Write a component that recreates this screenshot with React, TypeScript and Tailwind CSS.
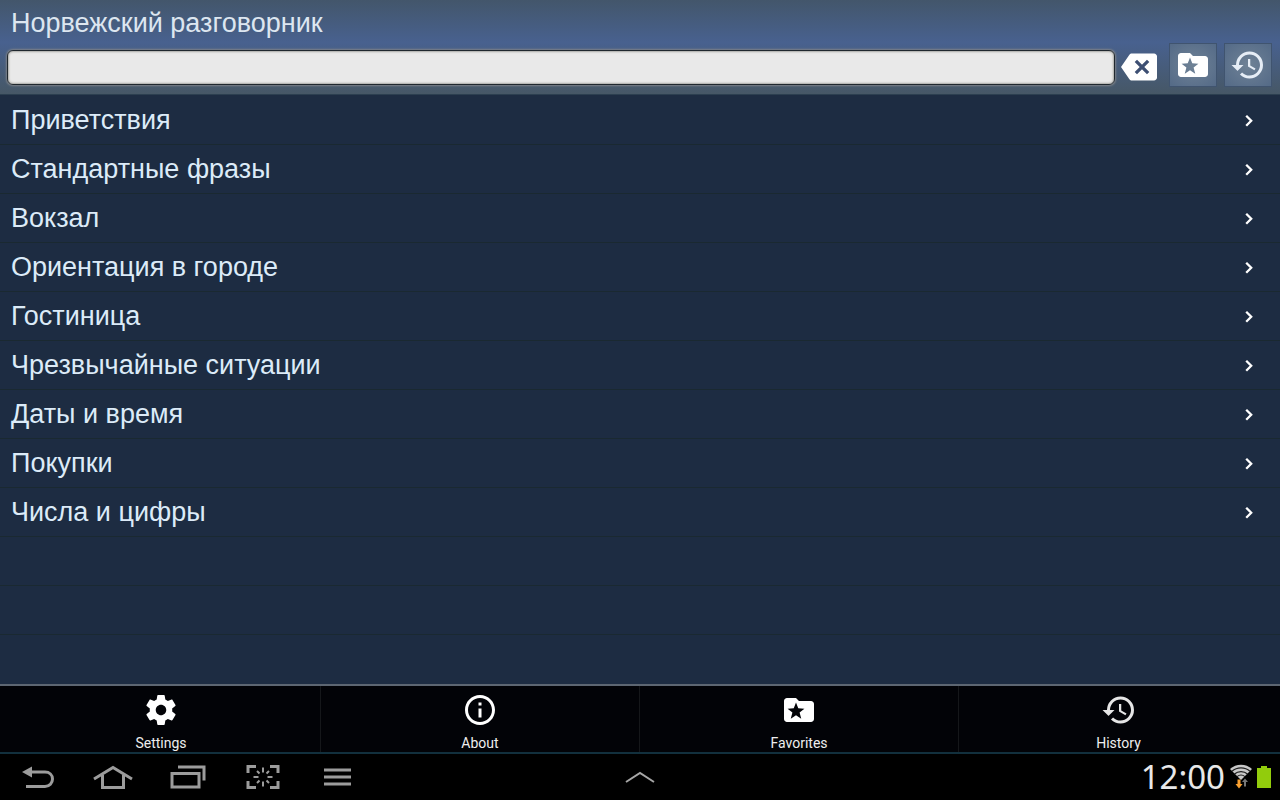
import { useState } from 'react';
import type { ReactNode } from 'react';
import { MdHistory, MdInfoOutline } from 'react-icons/md';

interface MenuItem {
  label: string;
  icon: ReactNode;
}

const categories = [
  'Приветствия',
  'Стандартные фразы',
  'Вокзал',
  'Ориентация в городе',
  'Гостиница',
  'Чрезвычайные ситуации',
  'Даты и время',
  'Покупки',
  'Числа и цифры',
];

function FolderStarIcon({ className }: { className?: string }) {
  return (
    <svg viewBox="0 0 24 24" fill="currentColor" fillRule="evenodd" className={className} aria-hidden="true">
      <path d="M20 6h-8l-2-2H4c-1.1 0-2 .9-2 2v12c0 1.1.9 2 2 2h16c1.1 0 2-.9 2-2V8c0-1.1-.9-2-2-2zM10 7l1.500 3.900 4.100.2-3.200 2.600 1.100 4.100-3.500-2.300-3.500 2.300 1.100-4.100-3.200-2.600 4.100-.2z" />
    </svg>
  );
}

function ClearIcon({ className }: { className?: string }) {
  return (
    <svg viewBox="0 0 24 24" className={className} aria-hidden="true">
      <path
        fill="currentColor"
        d="M22 3H7.200c-.6 0-1.200.3-1.600.9L0 12l5.600 8.100c.4.600 1 .9 1.600.9H22c1.100 0 2-.9 2-2V5c0-1.100-.9-2-2-2z"
      />
      <path d="M9.900 7.900l8.200 8.200M18.100 7.900l-8.200 8.200" stroke="#3d4f73" strokeWidth="2.200" />
    </svg>
  );
}

function ChevronIcon({ className }: { className?: string }) {
  return (
    <svg viewBox="0 0 24 24" fill="none" stroke="currentColor" strokeWidth="2.300" className={className} aria-hidden="true">
      <path d="M9.200 7.700l5 5-5 5" />
    </svg>
  );
}

function GearIcon({ className }: { className?: string }) {
  return (
    <svg viewBox="0 0 24 24" fill="currentColor" className={className} aria-hidden="true">
      <path d="M19.43 12.98c.04-.32.07-.64.07-.98s-.03-.66-.07-.98l2.110-1.650c.19-.15.24-.42.12-.64l-2-3.460c-.12-.22-.39-.3-.61-.22l-2.490 1c-.52-.4-1.080-.73-1.690-.98l-.38-2.650C14.460 2.180 14.250 2 14 2h-4c-.25 0-.46.18-.49.42l-.38 2.650c-.61.25-1.170.59-1.690.98l-2.490-1c-.23-.09-.49 0-.61.22l-2 3.460c-.13.22-.07.49.12.64l2.110 1.650c-.04.32-.07.65-.07.98s.03.66.07.98l-2.110 1.650c-.19.15-.24.42-.12.64l2 3.460c.12.22.39.3.61.22l2.490-1c.52.4 1.080.73 1.690.98l.38 2.650c.03.24.24.42.49.42h4c.25 0 .46-.18.49-.42l.38-2.650c.61-.25 1.170-.59 1.690-.98l2.490 1c.23.09.49 0 .61-.22l2-3.460c.12-.22.07-.49-.12-.64l-2.110-1.650zM12 15.500c-1.930 0-3.500-1.570-3.500-3.500s1.570-3.500 3.500-3.500 3.500 1.570 3.500 3.500-1.570 3.500-3.500 3.500z" />
    </svg>
  );
}

function BackIcon() {
  return (
    <svg width="32" height="24" viewBox="0 0 32 24" fill="none" stroke="currentColor" strokeWidth="3" aria-hidden="true">
      <path d="M8 7h15c4.500 0 7.500 3 7.500 7s-3 7.500-7.500 7.500H4" />
      <path d="M0 7l10-5.500v11z" fill="currentColor" stroke="none" />
    </svg>
  );
}

function HomeIcon() {
  return (
    <svg width="40" height="24" viewBox="0 0 40 24" fill="none" stroke="currentColor" strokeWidth="3" aria-hidden="true">
      <path d="M1 14L20 2.500 39 14" />
      <path d="M9.500 10v12.500h21V10" />
    </svg>
  );
}

function RecentsIcon() {
  return (
    <svg width="36" height="24" viewBox="0 0 36 24" fill="none" stroke="currentColor" strokeWidth="3" aria-hidden="true">
      <path d="M2 8.500h27v13.500H2z" />
      <path d="M8 2h26v13.500" />
    </svg>
  );
}

function CaptureIcon() {
  return (
    <svg width="34" height="24" viewBox="0 0 34 24" fill="none" stroke="currentColor" aria-hidden="true">
      <path strokeWidth="3" d="M2 8V1.500h8M24 1.500h8V8M32 16v6.500h-8M10 22.500H2V16" />
      <path strokeWidth="2" d="M17 2.500v5M17 16.500v5M7.500 12h5M21.500 12h5M11 6l2.500 2.500M23 6l-2.500 2.500M11 18l2.500-2.500M23 18l-2.500-2.500" />
    </svg>
  );
}

function MenuIcon() {
  return (
    <svg width="28" height="24" viewBox="0 0 28 24" stroke="currentColor" strokeWidth="3" aria-hidden="true">
      <path d="M0 5h27M0 12h27M0 19h27" />
    </svg>
  );
}

function WifiIcon() {
  return (
    <svg width="22" height="26" viewBox="0 0 22 26" fill="none" aria-hidden="true">
      <path d="M0 5C6-.8 16-.8 22 5L11 16z" fill="#c8c8c8" />
      <g stroke="#1c1c1c" strokeWidth="1.200">
        <path d="M2 7.300c5-4.600 13-4.600 18 0" />
        <path d="M4.500 10c3.500-3.200 9.500-3.200 13 0" />
        <path d="M7 12.600c2.500-2 5.500-2 8 0" />
      </g>
      <path d="M7.500 15.500h3V20h2L9 24.500 5.500 20h2z" fill="#f9a030" />
      <path d="M14 22.500h2V18h2l-3-3.500-3 3.500h2z" fill="#777777" />
    </svg>
  );
}

function BatteryIcon() {
  return (
    <svg width="14" height="22" viewBox="0 0 14 22" fill="#92cc0c" aria-hidden="true">
      <path d="M4 0h6v2h4v20H0V2h4z" />
    </svg>
  );
}

const menuItems: MenuItem[] = [
  { label: 'Settings', icon: <GearIcon className="size-9" /> },
  { label: 'About', icon: <MdInfoOutline className="size-9" /> },
  { label: 'Favorites', icon: <FolderStarIcon className="size-9" /> },
  { label: 'History', icon: <MdHistory className="size-9 text-[#e6e6e6]" /> },
];

const navItems: MenuItem[] = [
  { label: 'Back', icon: <BackIcon /> },
  { label: 'Home', icon: <HomeIcon /> },
  { label: 'Recent apps', icon: <RecentsIcon /> },
  { label: 'Screen capture', icon: <CaptureIcon /> },
  { label: 'Menu', icon: <MenuIcon /> },
];

const toolButton =
  'flex h-11 w-12 shrink-0 items-center justify-center border border-[#40546f] bg-radial from-[#6f8296] to-[#546a87]';

export default function App() {
  const [query, setQuery] = useState('');

  return (
    <div className="flex min-h-screen flex-col bg-[#1d2c42] font-['Liberation_Sans',Arial,sans-serif]">
      {/* Title and search */}
      <header className="bg-linear-to-b from-[#43566b] via-[#48618f] via-45% to-[#465766] pt-[7px] pr-2 pb-[7px] pl-[7px]">
        <h1 className="pl-1 text-[27px] leading-8 text-[#dde6f0]">Норвежский разговорник</h1>
        <div className="mt-1 flex items-center">
          <div className="flex-1 pt-[5px]">
            <input
              type="text"
              aria-label="Поиск"
              value={query}
              onChange={e => setQuery(e.target.value)}
              className="block h-[35px] w-full rounded-md border border-[#20282f] bg-[#e9e9e9] px-2 text-xl text-black shadow-[0_0_2px_1px_#7d8288,inset_0_0_2px_1px_#a9a9a4] outline-none"
            />
          </div>
          <button
            aria-label="Очистить"
            onClick={() => setQuery('')}
            className="mr-3 ml-1.5 shrink-0 pt-1 text-white"
          >
            <ClearIcon className="size-9" />
          </button>
          <div className="flex gap-[7px]">
            <button aria-label="Избранное" className={toolButton}>
              <FolderStarIcon className="size-9 text-white" />
            </button>
            <button aria-label="История" className={toolButton}>
              <MdHistory className="size-9 text-[#e6edf6]" />
            </button>
          </div>
        </div>
      </header>

      {/* Categories */}
      <main className="flex-1 border-t border-[#2c3f50] pt-px">
        <ul>
          {categories.map(name => (
            <li key={name} className="border-b border-[#1a2931]">
              <a href="#" className="flex h-12 items-center justify-between pr-[19px] pl-[11px] text-[27px] leading-8 text-[#dcebf8]">
                {name}
                <ChevronIcon className="size-6 text-white" />
              </a>
            </li>
          ))}
          <li className="h-[49px] border-b border-[#1a2931]" />
          <li className="h-[49px] border-b border-[#1a2931]" />
        </ul>
      </main>

      {/* Options menu */}
      <nav className="grid grid-cols-4 divide-x divide-[#15171a] border-t-2 border-[#5d6672] bg-[#020307] px-0.5 font-[Roboto,sans-serif]">
        {menuItems.map(item => (
          <button key={item.label} className="flex flex-col items-center pt-1.5 text-sm leading-[18px] text-[#eeeeee]">
            <span className="mb-1.5 text-white">{item.icon}</span>
            {item.label}
          </button>
        ))}
      </nav>

      {/* System bar */}
      <footer className="grid h-12 grid-cols-[1fr_auto_1fr] items-center border-t-2 border-[#12303d] bg-black font-[Roboto,sans-serif]">
        <div className="flex text-[#9c9c9c]">
          {navItems.map(item => (
            <button key={item.label} aria-label={item.label} className="flex w-[75px] justify-center">
              {item.icon}
            </button>
          ))}
        </div>
        <button aria-label="Show apps" className="text-[#a6a6a6]">
          <svg width="30" height="12" viewBox="0 0 30 12" fill="none" stroke="currentColor" strokeWidth="2" aria-hidden="true">
            <path d="M1 11L15 2l14 9" />
          </svg>
        </button>
        <div className="flex items-center justify-end gap-[5px] pr-[9px]">
          <time className="font-['Noto_Sans',sans-serif] text-[33px] leading-8 text-[#e8e8e8]">12:00</time>
          <WifiIcon />
          <BatteryIcon />
        </div>
      </footer>
    </div>
  );
}
